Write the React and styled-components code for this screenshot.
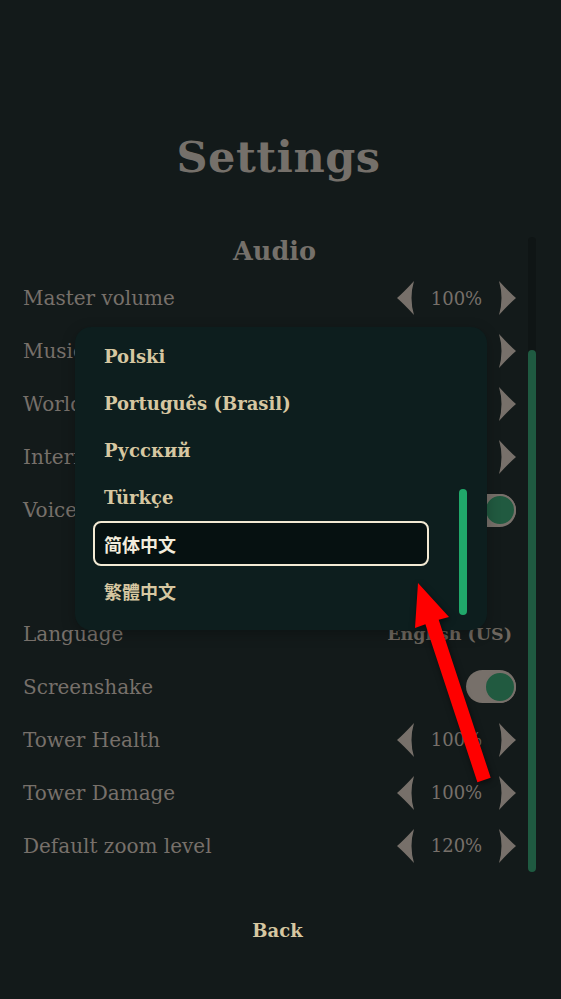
import styled, { createGlobalStyle } from "styled-components";

const GlobalStyle = createGlobalStyle`
    html, body {
        margin: 0;
        padding: 0;
        background: #131a1a;
    }
    * {
        box-sizing: border-box;
    }
`;

const Page = styled.div`
    position: relative;
    display: flex;
    flex-direction: column;
    align-items: center;
    width: 561px;
    height: 999px;
    overflow: hidden;
    background: #131a1a;
    font-family: "DejaVu Serif", "Noto Sans CJK SC", serif;
    color: #77706a;
`;

const Title = styled.h1`
    margin: 128px 4px 0 0;
    height: 109px;
    font-size: 43px;
    line-height: 58px;
    font-weight: 700;
    color: #75706a;
    letter-spacing: 0.5px;
`;

const ScrollRegion = styled.div`
    display: flex;
    gap: 12px;
    width: 100%;
    height: 635px;
    padding: 0 25px 0 23px;
`;

const Content = styled.div`
    flex: 1;
    display: flex;
    flex-direction: column;
`;

const SectionTitle = styled.h2`
    margin: ${({ first }) => (first ? "0" : "36px")} 0 7px;
    padding-left: 10px;
    text-align: center;
    font-size: 25.5px;
    line-height: 28px;
    font-weight: 700;
    color: #75706a;
`;

const Row = styled.div`
    display: flex;
    align-items: center;
    justify-content: space-between;
    height: 53px;
    font-size: 20px;
`;

const Label = styled.span`
    color: #77706a;
`;

const Stepper = styled.div`
    display: flex;
    align-items: center;
    width: 119px;
`;

const Value = styled.span`
    flex: 1;
    text-align: center;
    font-size: 18px;
    color: #77706a;
`;

const Chevron = styled.svg`
    width: 18px;
    height: 34px;
    display: block;
    fill: #77706a;
`;

const PlainValue = styled.span`
    padding-right: 4px;
    font-weight: 700;
    font-size: 17.5px;
    color: #6e675f;
`;

const Toggle = styled.div`
    display: flex;
    justify-content: ${({ on }) => (on ? "flex-end" : "flex-start")};
    align-items: center;
    width: 50px;
    height: 33px;
    border-radius: 17px;
    background: #77706a;
`;

const Knob = styled.div`
    width: 32px;
    height: 32px;
    border-radius: 50%;
    background: #215a40;
    border: 2px solid #77706a;
`;

const Scrollbar = styled.div`
    display: flex;
    flex-direction: column;
    width: 8px;
    border-radius: 4px;
    background: #0f1515;
`;

const Thumb = styled.div`
    margin-top: auto;
    border-radius: 4px;
    background: #1f5a41;
`;

const BackButton = styled.button`
    margin: 47px 6px 0 0;
    border: none;
    background: none;
    font-family: "DejaVu Serif", serif;
    font-weight: 700;
    font-size: 18px;
    color: #d6c7a1;
    cursor: pointer;
`;

const Dropdown = styled.div`
    position: absolute;
    left: 75px;
    top: 327px;
    width: 412px;
    height: 303px;
    display: flex;
    padding: 6px 20px 15px 18px;
    gap: 30px;
    border-radius: 16px;
    background: #0d1e1e;
    box-shadow: 0 4px 14px rgba(0, 0, 0, 0.25);
`;

const OptionList = styled.ul`
    list-style: none;
    margin: 0;
    padding: 0;
    width: 336px;
    display: flex;
    flex-direction: column;
`;

const Option = styled.li`
    display: flex;
    align-items: center;
    height: ${({ selected }) => (selected ? "46px" : "47.5px")};
    margin: ${({ selected }) => (selected ? "0 0 1.5px" : "0")};
    padding-left: ${({ selected }) => (selected ? "9px" : "11px")};
    border: ${({ selected }) => (selected ? "2px solid #f3ead4" : "none")};
    border-radius: 8px;
    background: ${({ selected }) => (selected ? "#061111" : "transparent")};
    font-weight: 700;
    font-size: 18px;
    color: ${({ selected }) => (selected ? "#f3ecdc" : "#d6c7a1")};
`;

const ListBar = styled.div`
    display: flex;
    flex-direction: column;
    width: 8px;
`;

const ListThumb = styled.div`
    margin-top: auto;
    height: 126px;
    border-radius: 4px;
    background: #20a86a;
`;

const Annotation = styled.svg`
    position: absolute;
    left: 0;
    top: 0;
    width: 561px;
    height: 999px;
    pointer-events: none;
    filter: drop-shadow(1px 2px 3px rgba(0, 0, 0, 0.5));
`;

function LeftArrow() {
    return (
        <Chevron viewBox="0 0 18 34">
            <path d="M17 0 Q7 11 0 17 Q7 23 17 34 Q12 17 17 0 Z" />
        </Chevron>
    );
}

function RightArrow() {
    return (
        <Chevron viewBox="0 0 18 34">
            <path d="M1 0 Q11 11 18 17 Q11 23 1 34 Q6 17 1 0 Z" />
        </Chevron>
    );
}

const audio = [
    ["Master volume", "100%"],
    ["Music volume", "100%"],
    ["World volume", "100%"],
    ["Interface volume", "100%"],
];

const game = [
    ["Tower Health", "100%"],
    ["Tower Damage", "100%"],
    ["Default zoom level", "120%"],
];

const languages = ["Polski", "Português (Brasil)", "Русский", "Türkçe", "简体中文", "繁體中文"];

function StepperRow({ label, value }) {
    return (
        <Row>
            <Label>{label}</Label>
            <Stepper>
                <LeftArrow />
                <Value>{value}</Value>
                <RightArrow />
            </Stepper>
        </Row>
    );
}

export default function App() {
    return (
        <Page>
            <GlobalStyle />
            <Title>Settings</Title>
            <ScrollRegion>
                <Content>
                    <SectionTitle first>Audio</SectionTitle>
                    {audio.map(([label, value]) => (
                        <StepperRow key={label} label={label} value={value} />
                    ))}
                    <Row>
                        <Label>Voices</Label>
                        <Toggle on>
                            <Knob />
                        </Toggle>
                    </Row>
                    <SectionTitle>Game</SectionTitle>
                    <Row>
                        <Label>Language</Label>
                        <PlainValue>English (US)</PlainValue>
                    </Row>
                    <Row>
                        <Label>Screenshake</Label>
                        <Toggle on>
                            <Knob />
                        </Toggle>
                    </Row>
                    {game.map(([label, value]) => (
                        <StepperRow key={label} label={label} value={value} />
                    ))}
                </Content>
                <Scrollbar>
                    <Thumb style={{ height: `${(522 / 635) * 100}%` }} />
                </Scrollbar>
            </ScrollRegion>
            <BackButton>Back</BackButton>

            <Dropdown>
                <OptionList>
                    {languages.map((lang) => (
                        <Option key={lang} selected={lang === "简体中文"}>
                            {lang}
                        </Option>
                    ))}
                </OptionList>
                <ListBar>
                    <ListThumb />
                </ListBar>
            </Dropdown>

            <Annotation viewBox="0 0 561 999">
                <polygon
                    fill="#ff0000"
                    points="418,583 449,617 438.7,619.8 490.7,777.8 477.4,782.2 425.4,624.2 415,628"
                />
            </Annotation>
        </Page>
    );
}
